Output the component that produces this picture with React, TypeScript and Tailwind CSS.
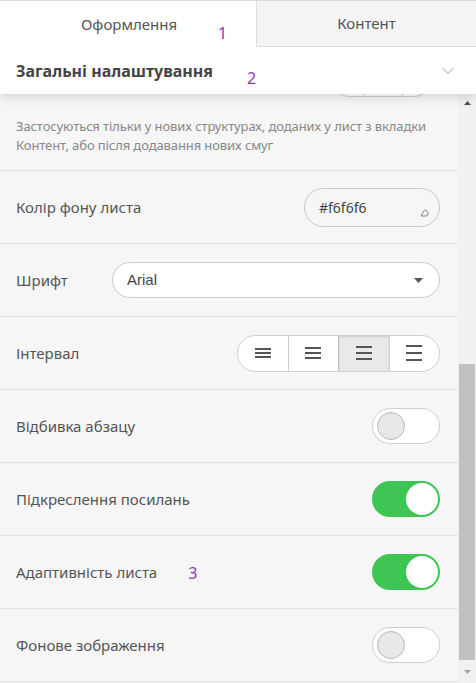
import { ChevronDown } from 'lucide-react';

const font = { fontFamily: '"Noto Sans", "Open Sans", sans-serif' };

function Mark({ n }: { n: string }) {
  return <span className="text-[16px] text-[#8e3bb5] leading-none">{n}</span>;
}

function Lines({ gap }: { gap: number }) {
  const g = ['gap-[2px]', 'gap-[3px]', 'gap-[4px]', 'gap-[5px]'][gap];
  return (
    <div className={'flex flex-col ' + g}>
      <span className="block w-[16px] h-[2px] bg-[#555]" />
      <span className="block w-[16px] h-[2px] bg-[#555]" />
      <span className="block w-[16px] h-[2px] bg-[#555]" />
    </div>
  );
}

function Toggle({ on }: { on: boolean }) {
  if (on) {
    return (
      <div className="w-[68px] h-[36px] rounded-full bg-[#3ec553] border-2 border-[#3ec553] flex items-center justify-end">
        <span className="block w-[32px] h-[32px] rounded-full bg-white" />
      </div>
    );
  }
  return (
    <div className="w-[68px] h-[36px] rounded-full bg-white border border-[#cfcfcf] flex items-center pl-[4px]">
      <span className="block w-[28px] h-[28px] rounded-full bg-[#e8e8e8] border border-[#b9b9b9]" />
    </div>
  );
}

function Row({ label, children, mark }: { label: string; children?: React.ReactNode; mark?: string }) {
  return (
    <div className="h-[73px] border-b border-[#e2e2e2] flex items-center pl-4 pr-[18px]">
      <span className="text-[15px] text-[#555]">{label}</span>
      {mark && (
        <span className="ml-[31px] mt-[2px]">
          <Mark n={mark} />
        </span>
      )}
      <div className="ml-auto">{children}</div>
    </div>
  );
}

export default function App() {
  return (
    <div className="w-[476px] h-[683px] overflow-hidden flex flex-col bg-[#f6f6f6] border-t border-[#dcdcdc]" style={font}>
      {/* Tabs */}
      <div className="flex h-[46px] shrink-0">
        <div className="w-[256px] bg-white relative flex items-center justify-center text-[15px] text-[#555]">
          <span className="pl-[2px]">Оформлення</span>
          <span className="absolute left-[218px] top-[21px]">
            <Mark n="1" />
          </span>
        </div>
        <div className="flex-1 bg-[#f4f4f4] border-l border-b border-[#dedede] flex items-center justify-center text-[15px] text-[#555]">
          Контент
        </div>
      </div>

      {/* Body */}
      <div className="relative flex-1 flex overflow-hidden">
        {/* Section header over the scrolled list */}
        <div className="absolute left-0 right-0 top-0 h-[47px] bg-white z-10 flex items-center pl-4 pr-[18px] shadow-[0_4px_10px_rgba(0,0,0,0.13)]">
          <span className="text-[16px] font-bold text-[#444]">Загальні налаштування</span>
          <span className="ml-[34px] mt-[14px]">
            <Mark n="2" />
          </span>
          <ChevronDown className="ml-auto text-[#c8c8c8]" size={20} strokeWidth={1.5} />
        </div>

        <div className="flex-1 flex flex-col">
          {/* tail of the previous row */}
          <div className="h-[50px] flex items-end justify-end pr-[26px]">
            <div className="flex h-[37px] rounded-full border border-[#cfcfcf] bg-white overflow-hidden">
              <div className="w-[32px]" />
              <div className="w-[38px] border-l border-[#cfcfcf]" />
              <div className="w-[29px] border-l border-[#cfcfcf]" />
            </div>
          </div>

          <div className="pt-[20px] pb-[15px] pl-4 pr-3 border-b border-[#e2e2e2] text-[13px] leading-[19px] text-[#888] tracking-[-0.1px]">
            Застосуються тільки у нових структурах, доданих у лист з вкладки Контент, або після додавання нових смуг
          </div>

          <Row label="Колір фону листа">
            <div className="w-[136px] h-[39px] rounded-full border border-[#c9c9c9] bg-[#f6f6f6] flex items-center pl-[14px] pr-[12px] text-[14px] text-[#444] relative">
              #f6f6f6
              <svg className="absolute right-[10px] bottom-[9px]" width="9" height="8" viewBox="0 0 9 8">
                <path d="M1 7 L4 1.5 Q5 0.5 6.5 1.5 L8 4 Q8.5 7 6 7 Z" fill="none" stroke="#777" strokeWidth="0.9" />
              </svg>
            </div>
          </Row>

          <div className="h-[73px] border-b border-[#e2e2e2] flex items-center pl-4 pr-[18px]">
            <span className="text-[15px] text-[#555] w-[96px]">Шрифт</span>
            <div className="flex-1 h-[36px] rounded-full border border-[#c9c9c9] bg-white flex items-center pl-[14px] pr-[16px]">
              <span className="text-[15px] text-[#444]" style={{ fontFamily: '"Liberation Sans", Arial, sans-serif' }}>
                Arial
              </span>
              <svg className="ml-auto" width="9" height="5" viewBox="0 0 9 5">
                <path d="M0 0 H9 L4.5 5 Z" fill="#555" />
              </svg>
            </div>
          </div>

          <Row label="Інтервал">
            <div className="flex w-[203px] h-[37px] rounded-full border border-[#cfcfcf] bg-white overflow-hidden">
              <div className="flex-1 flex items-center justify-center">
                <Lines gap={0} />
              </div>
              <div className="flex-1 flex items-center justify-center border-l border-[#cfcfcf]">
                <Lines gap={1} />
              </div>
              <div className="flex-1 flex items-center justify-center border-l border-[#bdbdbd] bg-[#e9e9e9] shadow-[inset_0_1px_2px_rgba(0,0,0,0.12)]">
                <Lines gap={2} />
              </div>
              <div className="flex-1 flex items-center justify-center border-l border-[#cfcfcf]">
                <Lines gap={3} />
              </div>
            </div>
          </Row>

          <Row label="Відбивка абзацу">
            <Toggle on={false} />
          </Row>
          <Row label="Підкреслення посилань">
            <Toggle on />
          </Row>
          <Row label="Адаптивність листа" mark="3">
            <Toggle on />
          </Row>
          <Row label="Фонове зображення">
            <Toggle on={false} />
          </Row>
        </div>

        {/* Scrollbar */}
        <div className="w-[18px] shrink-0 bg-[#f1f1f1] flex flex-col pt-[47px]">
          <div className="h-[17px] flex items-center justify-center">
            <svg width="7" height="4" viewBox="0 0 7 4">
              <path d="M0 4 L3.5 0 L7 4 Z" fill="#505050" />
            </svg>
          </div>
          <div className="h-[253px]" />
          <div className="h-[296px] mx-[1px] bg-[#c1c1c1]" />
          <div className="flex-1 flex items-center justify-center">
            <svg width="7" height="4" viewBox="0 0 7 4">
              <path d="M0 0 L3.5 4 L7 0 Z" fill="#a3a3a3" />
            </svg>
          </div>
        </div>
      </div>
    </div>
  );
}
